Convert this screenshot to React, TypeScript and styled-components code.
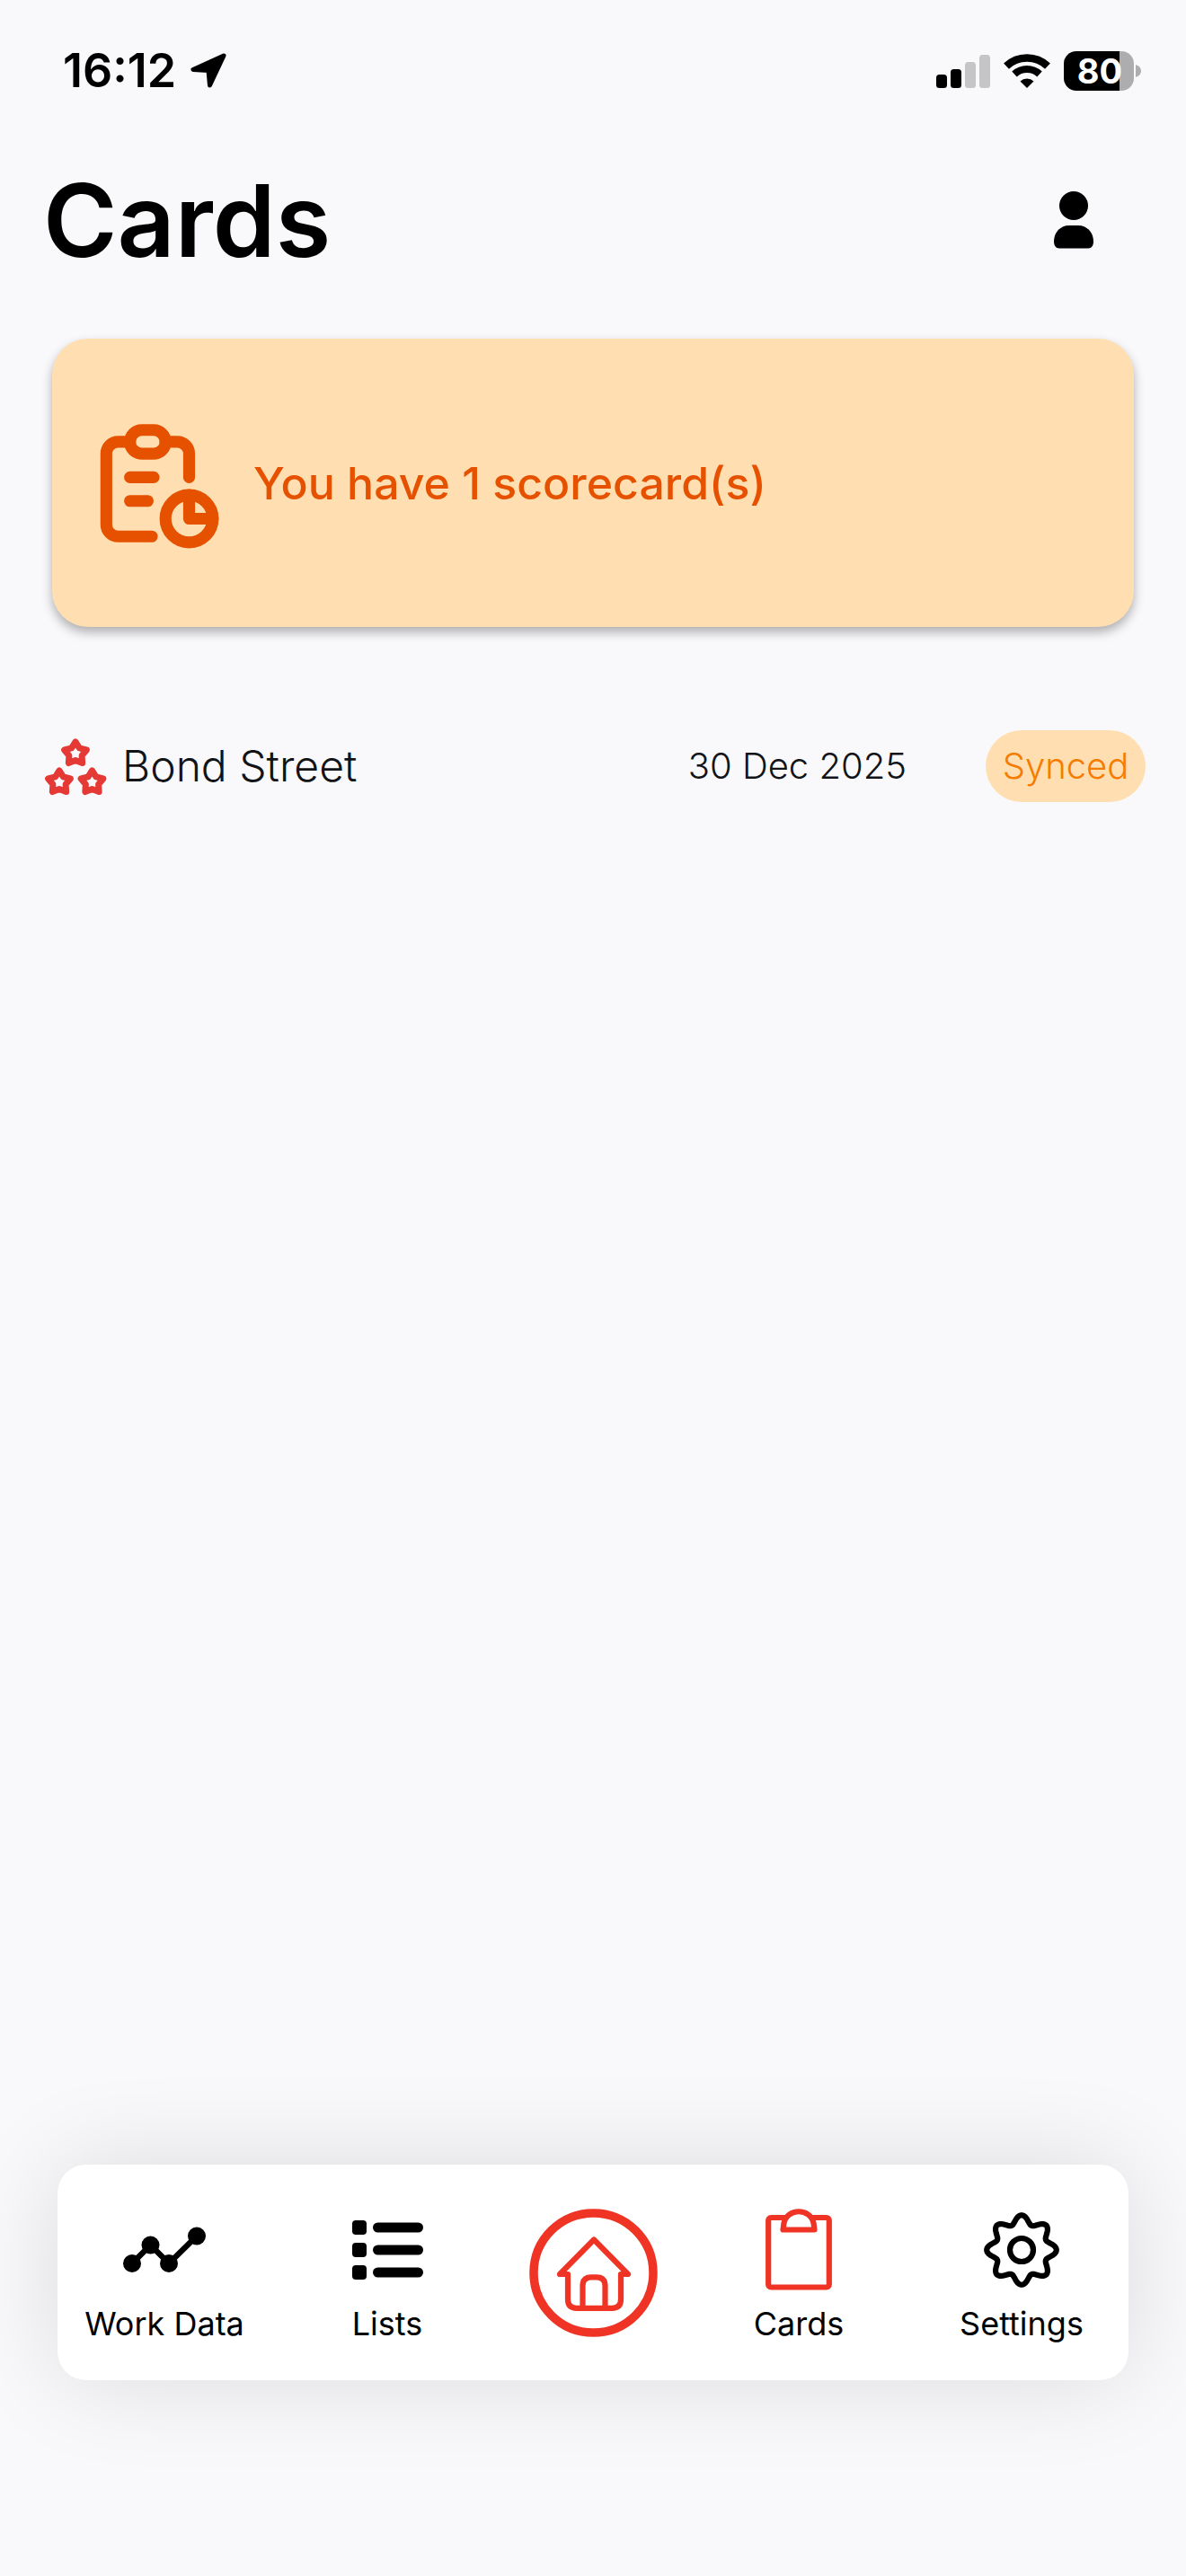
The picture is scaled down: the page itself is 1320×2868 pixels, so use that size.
import React from "react";
import styled, { createGlobalStyle } from "styled-components";

const GlobalStyle = createGlobalStyle`
  *, *::before, *::after { box-sizing: border-box; }
  body {
    margin: 0;
    background: #f9f9fc;
    color: #000;
    font-family: Inter, "Open Sans", sans-serif;
  }
`;

const Page = styled.div`
  display: flex;
  flex-direction: column;
  min-height: 100vh;
`;

const StatusBar = styled.div`
  display: flex;
  align-items: center;
  justify-content: space-between;
  height: 158px;
  padding: 0 50px 0 70px;
`;

const StatusGroup = styled.div`
  display: flex;
  align-items: center;
  gap: 15px;
`;

const Clock = styled.time`
  font-size: 52px;
  font-weight: 600;
  line-height: 60px;
`;

const Battery = styled.div`
  display: flex;
  align-items: center;
  gap: 2px;
`;

const BatteryBody = styled.div`
  display: flex;
  align-items: center;
  justify-content: center;
  width: 78px;
  height: 44px;
  padding-left: 2px;
  border-radius: 14px;
  background: linear-gradient(to right, #000 80%, #adadaf 80%);
  color: #fff;
  font-size: 38px;
  font-weight: 700;
  line-height: 44px;
`;

const Header = styled.header`
  display: flex;
  align-items: center;
  justify-content: space-between;
  padding: 27px 90px 0 48px;
`;

const Title = styled.h1`
  margin: 0;
  font-size: 112px;
  font-weight: 600;
  line-height: 120px;
`;

const IconButton = styled.button`
  display: flex;
  padding: 12px;
  border: 0;
  background: none;
  color: inherit;
  cursor: pointer;
`;

const Main = styled.main`
  flex: 1;
  padding-top: 72px;
`;

const SummaryCard = styled.section`
  display: flex;
  align-items: center;
  gap: 32px;
  min-height: 321px;
  margin: 0 58px;
  padding: 0 34px;
  border-radius: 40px;
  background: #ffdfb1;
  box-shadow: 0 6px 12px rgba(0, 0, 0, 0.3);
  color: #e65100;
`;

const SummaryText = styled.p`
  margin: 0;
  font-size: 50px;
  font-weight: 500;
  line-height: 60px;
`;

const CardList = styled.ul`
  margin: 115px 0 0;
  padding: 0 45px 0 49px;
  list-style: none;
`;

const CardRow = styled.li`
  display: flex;
  align-items: center;
  min-height: 80px;
  color: #111317;
  font-size: 40px;
  font-weight: 300;
  line-height: 48px;
`;

const CardName = styled.span`
  flex: 1;
  padding-left: 16px;
  font-size: 48px;
`;

const CardDate = styled.time`
  padding-right: 88px;
`;

const Pill = styled.span`
  min-width: 178px;
  padding: 16px;
  border-radius: 40px;
  background: #ffdfb1;
  color: #f57c00;
  text-align: center;
`;

const TabBar = styled.nav`
  display: flex;
  align-items: flex-start;
  justify-content: space-between;
  margin: 0 64px 218px;
  padding: 49px 24px 41px;
  border-radius: 32px;
  background: #fff;
  box-shadow: 0 0 110px rgba(0, 0, 0, 0.12);
`;

const Tab = styled.a<{ $edge?: boolean }>`
  display: flex;
  flex-direction: column;
  align-items: center;
  gap: 14px;
  width: ${(p) => (p.$edge ? 190 : 152)}px;
  color: #000;
  font-size: 36px;
  line-height: 44px;
  text-decoration: none;
  white-space: nowrap;
`;

const TabIcon = styled.span`
  display: flex;
  align-items: center;
  justify-content: center;
  height: 92px;
`;

const BRAND_RED = "#ef3324";

const ArrowIcon = () => (
  <svg width="42" height="42" viewBox="0 0 42 42" aria-hidden="true">
    <path d="M38 4 4 19.5 21 20.5 22.5 37Z" fill="#000" stroke="#000" strokeWidth="5" strokeLinejoin="round" />
  </svg>
);

const SignalIcon = () => (
  <svg width="60" height="38" viewBox="0 0 60 38" aria-hidden="true">
    <rect x="0" y="23" width="12" height="15" rx="3.5" />
    <rect x="16" y="17" width="12" height="21" rx="3.5" />
    <rect x="32" y="9" width="12" height="29" rx="3.5" fill="#c5c5c7" />
    <rect x="48" y="1" width="12" height="37" rx="3.5" fill="#c5c5c7" />
  </svg>
);

const WifiIcon = () => (
  <svg width="52" height="40" viewBox="0 0 52 40" aria-hidden="true">
    <g fill="none" stroke="#000">
      <path d="M3 14.6A33.5 33.5 0 0 1 49 14.6" strokeWidth="8.5" />
      <path d="M12 23.5A20.5 20.5 0 0 1 40 23.5" strokeWidth="8" />
    </g>
    <path d="M26 39 18.5 31.5A11 11 0 0 1 33.5 31.5Z" />
  </svg>
);

const BatteryTip = () => (
  <svg width="6" height="14" viewBox="0 0 6 14" aria-hidden="true">
    <path d="M0 0Q6 2 6 7T0 14Z" fill="#adadaf" />
  </svg>
);

const PersonIcon = () => (
  <svg width="46" height="66" viewBox="0 0 46 66" aria-hidden="true">
    <circle cx="23" cy="17" r="16" />
    <path d="M1 57C1 47 8 39 18 39H28C38 39 45 47 45 57C45 61 43 64.5 39 64.5H7C3 64.5 1 61 1 57Z" />
  </svg>
);

const ReportIcon = () => (
  <svg
    width="158"
    height="158"
    viewBox="0 0 24 24"
    fill="none"
    stroke="currentColor"
    strokeWidth="2"
    strokeLinecap="round"
    strokeLinejoin="round"
    aria-hidden="true"
  >
    <path d="M8 5H6a2 2 0 0 0-2 2v12a2 2 0 0 0 2 2h5.697" />
    <path d="M18 14v4h4" />
    <path d="M18 11V7a2 2 0 0 0-2-2h-2" />
    <rect x="8" y="3" width="6" height="4" rx="2" />
    <circle cx="18" cy="18" r="4" />
    <path d="M8 11h4M8 15h3" />
  </svg>
);

const starPoints = (cx: number, cy: number) =>
  Array.from({ length: 10 }, (_, i) => {
    const r = i % 2 ? 7.5 : 13;
    const a = (i * Math.PI) / 5 - Math.PI / 2;
    return `${(cx + r * Math.cos(a)).toFixed(2)},${(cy + r * Math.sin(a)).toFixed(2)}`;
  }).join(" ");

const StarsIcon = () => (
  <svg width="71" height="66" viewBox="0 0 71 66" aria-hidden="true">
    <g fill="none" stroke="#e53935" strokeWidth="7" strokeLinejoin="round">
      <polygon points={starPoints(35, 19)} />
      <polygon points={starPoints(17, 51)} />
      <polygon points={starPoints(53.5, 51)} />
    </g>
  </svg>
);

const WorkDataIcon = () => (
  <svg width="92" height="52" viewBox="0 0 92 52" aria-hidden="true">
    <path d="M10 41 30.5 20.5 51 41 82 10.5" fill="none" stroke="#000" strokeWidth="6.5" />
    <circle cx="10" cy="41" r="10" />
    <circle cx="30.5" cy="20.5" r="10" />
    <circle cx="51" cy="41" r="10" />
    <circle cx="82" cy="10.5" r="10" />
  </svg>
);

const ListsIcon = () => (
  <svg width="79" height="66" viewBox="0 0 79 66" aria-hidden="true">
    {[0, 25, 50].map((y) => (
      <g key={y}>
        <rect x="0" y={y} width="16" height="16" rx="4" />
        <rect x="23" y={y + 2.5} width="56" height="11" rx="5.5" />
      </g>
    ))}
  </svg>
);

const HomeIcon = () => (
  <svg width="143" height="143" viewBox="0 0 143 143" aria-hidden="true">
    <g fill="none" stroke={BRAND_RED} strokeWidth="6.2" strokeLinecap="round" strokeLinejoin="round">
      <circle cx="71.5" cy="71.5" r="66.5" strokeWidth="9.5" />
      <path d="M43 73H34L72 34.5 110 73H102V101Q102 110.8 92 110.8H53Q43 110.8 43 101Z" stroke="none" />
      <path d="M43 73H34L72 34.5 110 73H102V101Q102 110.8 92 110.8H53Q43 110.8 43 101V73" />
      <path d="M59.5 110V86Q59.5 76.3 69 76.3H75Q84.5 76.3 84.5 86V110" />
    </g>
  </svg>
);

const CardsIcon = () => (
  <svg width="74" height="92" viewBox="0 0 74 92" aria-hidden="true">
    <g fill="#fff" stroke={BRAND_RED} strokeWidth="6.2" strokeLinejoin="round">
      <rect x="3.2" y="10" width="67.6" height="77.5" rx="3" />
      <path d="M19.5 23.5 20.5 16C24 -1 50 -1 53.5 16L54.5 23.5Z" />
    </g>
  </svg>
);

const gearPath =
  Array.from({ length: 160 }, (_, i) => {
    const a = (i * Math.PI) / 80;
    const r = 34 + 4.8 * Math.cos(8 * a);
    return `${i ? "L" : "M"}${(42 + r * Math.sin(a)).toFixed(2)} ${(42 - r * Math.cos(a)).toFixed(2)}`;
  }).join("") + "Z";

const SettingsIcon = () => (
  <svg width="84" height="84" viewBox="0 0 84 84" aria-hidden="true">
    <g fill="none" stroke="#000" strokeWidth="6.2" strokeLinejoin="round">
      <path d={gearPath} />
      <circle cx="42" cy="42" r="13" />
    </g>
  </svg>
);

export default function App() {
  return (
    <Page>
      <GlobalStyle />
      <StatusBar>
        <StatusGroup>
          <Clock>16:12</Clock>
          <ArrowIcon />
        </StatusGroup>
        <StatusGroup>
          <SignalIcon />
          <WifiIcon />
          <Battery>
            <BatteryBody>80</BatteryBody>
            <BatteryTip />
          </Battery>
        </StatusGroup>
      </StatusBar>

      <Header>
        <Title>Cards</Title>
        <IconButton type="button" aria-label="Profile">
          <PersonIcon />
        </IconButton>
      </Header>

      <Main>
        <SummaryCard>
          <ReportIcon />
          <SummaryText>You have 1 scorecard(s)</SummaryText>
        </SummaryCard>

        <CardList>
          <CardRow>
            <StarsIcon />
            <CardName>Bond Street</CardName>
            <CardDate dateTime="2025-12-30">30 Dec 2025</CardDate>
            <Pill>Synced</Pill>
          </CardRow>
        </CardList>
      </Main>

      <TabBar aria-label="Main">
        <Tab href="#work-data" $edge>
          <TabIcon>
            <WorkDataIcon />
          </TabIcon>
          Work Data
        </Tab>
        <Tab href="#lists">
          <TabIcon>
            <ListsIcon />
          </TabIcon>
          Lists
        </Tab>
        <Tab href="#home" aria-label="Home">
          <HomeIcon />
        </Tab>
        <Tab href="#cards" aria-current="page">
          <TabIcon>
            <CardsIcon />
          </TabIcon>
          Cards
        </Tab>
        <Tab href="#settings" $edge>
          <TabIcon>
            <SettingsIcon />
          </TabIcon>
          Settings
        </Tab>
      </TabBar>
    </Page>
  );
}
